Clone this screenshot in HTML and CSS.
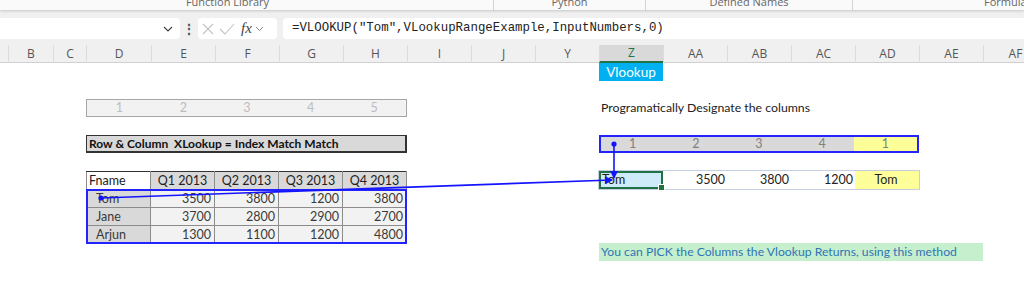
FILE: index.html
```html
<!DOCTYPE html>
<html lang="en">
<head>
  <meta charset="UTF-8">
  <title>VLOOKUP pick columns</title>
  <link rel="stylesheet" href="styles.css">
</head>
<body>

  <div class="ribbon">
    <div class="group g-func"><span>Function Library</span></div>
    <div class="group g-py"><span>Python</span></div>
    <div class="group g-names"><span>Defined Names</span></div>
    <div class="group g-audit"><span>Formula Auditing</span></div>
  </div>

  <div class="formula-bar">
    <div class="name-box">
      <svg class="chev" width="10" height="6" viewBox="0 0 10 6"><path d="M1 1 L5 5 L9 1" fill="none" stroke="#444" stroke-width="1.2"/></svg>
    </div>
    <div class="dots">&#8942;</div>
    <div class="fx-box">
      <svg width="14" height="14" viewBox="0 0 14 14"><path d="M2 2 L12 12 M12 2 L2 12" stroke="#c4c4c4" stroke-width="1.1"/></svg>
      <svg width="16" height="14" viewBox="0 0 16 14"><path d="M1 7 L6 12 L15 2" fill="none" stroke="#c4c4c4" stroke-width="1.1"/></svg>
      <span class="fx">fx</span>
      <svg class="chev-sm" width="9" height="6" viewBox="0 0 9 6"><path d="M1 1 L4.5 4.5 L8 1" fill="none" stroke="#888" stroke-width="1"/></svg>
    </div>
    <div class="formula-input">=VLOOKUP("Tom",VLookupRangeExample,InputNumbers,0)</div>
  </div>

  <div class="col-heads">
    <div class="stub"></div>
    <div>B</div><div>C</div><div>D</div><div>E</div><div>F</div><div>G</div><div>H</div>
    <div>I</div><div>J</div><div>Y</div><div class="active">Z</div><div>AA</div><div>AB</div>
    <div>AC</div><div>AD</div><div>AE</div><div>AF</div>
  </div>

  <div class="sheet">
    <div class="vlookup-tag">Vlookup</div>

    <div class="num-strip">
      <span>1</span><span>2</span><span>3</span><span>4</span><span>5</span>
    </div>
    <div class="prog-note">Programatically Designate the columns</div>

    <div class="title-cell">Row &amp; Column&nbsp; XLookup = Index Match Match</div>
    <div class="pick-strip">
      <span>1</span><span>2</span><span>3</span><span>4</span><span class="pick">1</span>
    </div>

    <div class="data-wrap">
      <table class="data">
        <tr class="head"><td class="fname">Fname</td><td>Q1 2013</td><td>Q2 2013</td><td>Q3 2013</td><td>Q4 2013</td></tr>
        <tr><td class="nm">Tom</td><td>3500</td><td>3800</td><td>1200</td><td>3800</td></tr>
        <tr><td class="nm">Jane</td><td>3700</td><td>2800</td><td>2900</td><td>2700</td></tr>
        <tr><td class="nm">Arjun</td><td>1300</td><td>1100</td><td>1200</td><td>4800</td></tr>
      </table>
      <div class="range-mark"></div>
    </div>

    <div class="result-row">
      <span class="sel">Tom</span><span>3500</span><span>3800</span><span>1200</span><span class="pick">Tom</span>
    </div>

    <div class="green-note">You can PICK the Columns the Vlookup Returns, using this method</div>
  </div>

  <svg class="arrows" width="1024" height="291" viewBox="0 0 1024 291">
    <defs>
      <marker id="head" markerWidth="8" markerHeight="8" refX="7" refY="4" orient="auto" markerUnits="userSpaceOnUse">
        <path d="M0 0 L8 4 L0 8 Z" fill="#1414ff"/>
      </marker>
    </defs>
    <circle cx="101" cy="198" r="2.6" fill="#1414ff"/>
    <line x1="101" y1="198" x2="612" y2="180" stroke="#1414ff" stroke-width="1.6" marker-end="url(#head)"/>
    <circle cx="614" cy="144" r="2.6" fill="#1414ff"/>
    <line x1="614" y1="144" x2="614" y2="178" stroke="#1414ff" stroke-width="1.6" marker-end="url(#head)"/>
  </svg>

</body>
</html>
```

FILE: styles.css
```css
body {
  margin: 0;
  width: 1024px;
  height: 291px;
  overflow: hidden;
  background: #fff;
  font-family: Lato, "Liberation Sans", sans-serif;
  position: relative;
}

/* ribbon group captions, cut off at the top */
.ribbon {
  height: 10px;
  display: flex;
  background: #fafafa;
  overflow: hidden;
  box-shadow: 0 1px 3px rgba(0, 0, 0, 0.18);
  position: relative;
  z-index: 2;
}

.ribbon .group {
  flex: none;
  text-align: center;
  font-family: "Open Sans", sans-serif;
  font-size: 11px;
  color: #666;
  line-height: 10px;
  border-right: 1px solid #d4d4d4;
  height: 10px;
}

.ribbon .group span {
  display: block;
  margin-top: -3px;
}

.g-func { width: 455px; padding-right: 38px; }
.g-py { width: 151px; }
.g-names { width: 206px; }
.g-audit { width: 350px; border-right: none; }

/* formula bar */
.formula-bar {
  height: 35px;
  background: #f0f0f0;
  display: flex;
  align-items: flex-start;
  padding-top: 8px;
  box-sizing: border-box;
}

.name-box {
  width: 180px;
  height: 21px;
  background: #fff;
  border-radius: 0 4px 4px 0;
  display: flex;
  justify-content: flex-end;
  align-items: center;
  padding-right: 7px;
  box-sizing: border-box;
}

.dots {
  width: 18px;
  text-align: center;
  font-size: 14px;
  line-height: 21px;
  color: #555;
  font-weight: bold;
}

.fx-box {
  width: 79px;
  height: 21px;
  background: #fff;
  border-radius: 4px;
  display: flex;
  align-items: center;
  gap: 4px;
  padding-left: 3px;
  box-sizing: border-box;
}

.fx-box .fx {
  font-family: "Liberation Serif", serif;
  font-style: italic;
  font-size: 15px;
  color: #444;
  margin-left: 2px;
  line-height: 21px;
}

.fx-box .chev-sm { margin-left: -1px; }

.formula-input {
  flex: 1;
  margin-left: 6px;
  height: 21px;
  background: #fff;
  border-radius: 4px 0 0 4px;
  font-family: "Liberation Mono", monospace;
  font-size: 12.4px;
  line-height: 21px;
  color: #222;
  padding-left: 9px;
  white-space: nowrap;
}

/* column letters */
.col-heads,
.sheet {
  display: grid;
  grid-template-columns: 8px 45px 33px 65px repeat(14, 64px);
}

.col-heads {
  height: 17px;
  background: #f0f0f0;
  border-bottom: 1px solid #d0d0d0;
  font-family: "Open Sans", sans-serif;
  font-size: 12px;
  color: #555;
}

.col-heads div {
  text-align: center;
  line-height: 17px;
  border-left: 1px solid #dcdcdc;
}

.col-heads .stub { border-left: none; }

.col-heads .active {
  background: #d9d9d9;
  color: #217346;
  border-bottom: 2px solid #217346;
  line-height: 16px;
  height: 16px;
}

/* worksheet */
.sheet {
  grid-template-rows: repeat(11, 18px);
  font-size: 12.5px;
  color: #222;
}

.vlookup-tag {
  grid-column: 12 / 13;
  grid-row: 1;
  background: #00b0f0;
  color: #fff;
  text-align: center;
  line-height: 18px;
  font-size: 13.5px;
}

.num-strip {
  grid-column: 4 / 9;
  grid-row: 3;
  display: grid;
  grid-template-columns: 65fr 64fr 64fr 64fr 64fr;
  background: #f2f2f2;
  border: 1px solid #a6a6a6;
  color: #bdbdbd;
  line-height: 16px;
}

.num-strip span,
.pick-strip span { text-align: center; }

.prog-note {
  grid-column: 12 / 18;
  grid-row: 3;
  line-height: 18px;
  padding-left: 2px;
  white-space: nowrap;
  font-size: 12.3px;
}

.title-cell {
  grid-column: 4 / 9;
  grid-row: 5;
  background: #d9d9d9;
  border: 1px solid #333;
  border-width: 1px 2px 2px 1px;
  font-weight: bold;
  font-size: 12px;
  line-height: 15px;
  padding-left: 2px;
  white-space: nowrap;
  color: #111;
}

.pick-strip {
  grid-column: 12 / 17;
  grid-row: 5;
  display: grid;
  grid-template-columns: repeat(5, 1fr);
  background: #d9d9d9;
  border: 2px solid #2323ff;
  color: #808080;
  line-height: 14px;
}

.pick-strip .pick { background: #ffff99; }

.data-wrap {
  grid-column: 4 / 9;
  grid-row: 7 / 11;
  position: relative;
}

.data {
  width: 100%;
  border-collapse: collapse;
  table-layout: fixed;
  color: #3a3a3a;
}

.data td {
  height: 17px;
  padding: 0 3px;
  border: 1px solid #8c8c8c;
  background: #f2f2f2;
  text-align: right;
  line-height: 17px;
  white-space: nowrap;
}

.data td:first-child { width: 58px; }

.data .head td {
  background: #d9d9d9;
  text-align: center;
  color: #222;
  border-top-color: #333;
}

.data .head .fname {
  background: #fff;
  text-align: left;
  padding-left: 2px;
}

.data .nm {
  background: #d9d9d9;
  text-align: left;
  padding-left: 9px;
}

.range-mark {
  position: absolute;
  left: 0;
  right: 0;
  top: 18px;
  bottom: -1px;
  border: 2px solid #2323ff;
}

.result-row {
  grid-column: 12 / 17;
  grid-row: 7;
  display: grid;
  grid-template-columns: repeat(5, 1fr);
  line-height: 18px;
  box-shadow: 0 0 0 1px #c5cfe0;
}

.result-row span { text-align: right; padding-right: 2px; }

.result-row .sel {
  text-align: left;
  background: #cfeaf8;
  border: 2px solid #217346;
  line-height: 14px;
  padding-left: 1px;
  position: relative;
}

.result-row .sel::after {
  content: "";
  position: absolute;
  right: -4px;
  bottom: -4px;
  width: 5px;
  height: 5px;
  background: #217346;
  border: 1px solid #fff;
}

.result-row .pick {
  background: #ffff99;
  text-align: center;
}

.green-note {
  grid-column: 12 / 18;
  grid-row: 11;
  background: #c6efce;
  color: #2f75b5;
  line-height: 18px;
  padding-left: 2px;
  white-space: nowrap;
  font-size: 12.2px;
}

.arrows {
  position: absolute;
  left: 0;
  top: 0;
  pointer-events: none;
}
```
